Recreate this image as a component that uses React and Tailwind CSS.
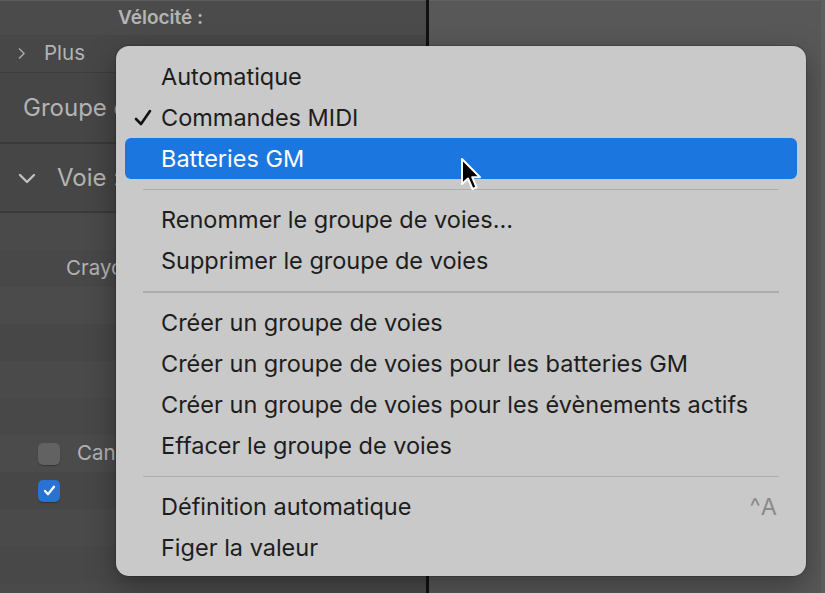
const font = { fontFamily: "Inter, 'Noto Sans', sans-serif" };

function Chevron({ down, className }) {
  return (
    <svg viewBox="0 0 20 20" className={className} fill="none" stroke="currentColor" strokeWidth="2.4" strokeLinecap="round" strokeLinejoin="round">
      {down ? <path d="M3 7l7 7 7-7" /> : <path d="M7 3l7 7-7 7" />}
    </svg>
  );
}

function MenuItem({ label, checked, active, shortcut }) {
  return (
    <div
      className={`relative mx-[9px] flex h-[41px] items-center rounded-[6px] pl-[36px] pr-[18px] text-[23.5px] ${
        active ? "bg-[#1b76e0] text-white" : "text-[#1d1d1d]"
      }`}
    >
      {checked && (
        <svg viewBox="0 0 20 20" className="absolute left-[8px] top-[11px] h-[20px] w-[20px]" fill="none" stroke="#111" strokeWidth="2.6" strokeLinecap="round" strokeLinejoin="round">
          <path d="M3 11l5 5L17 3" />
        </svg>
      )}
      <span className="flex-1">{label}</span>
      {shortcut && <span className="tracking-[2px] text-[#8a8a8a]">{shortcut}</span>}
    </div>
  );
}

function Sep() {
  return <div className="mx-[27px] my-[9.5px] h-[1.5px] bg-[#adadad]" />;
}

export default function App() {
  const stripes = ["bg-[#4a4a4a]", "bg-[#484848]", "bg-[#4b4b4b]", "bg-[#474747]", "bg-[#4a4a4a]", "bg-[#484848]", "bg-[#4b4b4b]", "bg-[#474747]", "bg-[#4a4a4a]", "bg-[#484848]"];
  return (
    <div className="relative h-[593px] w-[825px] overflow-hidden bg-[#585858]" style={font}>
      <div className="flex h-full">
        {/* left inspector panel */}
        <div className="flex w-[426px] flex-col border-t border-[#5c5c5c] bg-[#4a4a4a] text-[#b4b4b4]">
          <div className="flex h-[34px] items-center pl-[118px] text-[19px] font-semibold bg-[#4b4b4b]">Vélocité :</div>
          <div className="flex h-[38px] items-center gap-[16px] pl-[15px] text-[20.5px] bg-[#474747] border-b border-[#3c3c3c]">
            <Chevron className="h-[13px] w-[13px] text-[#a8a8a8]" />
            <span>Plus</span>
          </div>
          <div className="flex h-[71px] items-center pl-[23px] text-[24px] bg-[#464646] border-b-2 border-[#3a3a3a]">
            <span className="w-[93px] overflow-hidden whitespace-nowrap">Groupe de voies</span>
          </div>
          <div className="flex h-[69px] items-center gap-[20px] pl-[17px] text-[24px] bg-[#464646] border-b-2 border-[#3a3a3a]">
            <Chevron down className="h-[20px] w-[20px] text-[#c0c0c0]" />
            <span>Voie :</span>
          </div>
          <div className="flex flex-1 flex-col">
            {stripes.map((s, i) => (
              <div key={i} className={`relative flex h-[37px] shrink-0 items-center ${s}`}>
                {i === 1 && <span className="pl-[66px] text-[20.5px]">Crayon</span>}
                {i === 6 && (
                  <div className="flex items-center gap-[17px] pl-[38px]">
                    <div className="h-[22px] w-[22px] rounded-[5px] bg-[#626262] shadow-[0_1px_1px_rgba(0,0,0,0.3)]" />
                    <span className="text-[20.5px]">Canal</span>
                  </div>
                )}
                {i === 7 && (
                  <div className="pl-[38px]">
                    <div className="flex h-[22px] w-[22px] items-center justify-center rounded-[5px] bg-[#2a72d2] shadow-[0_1px_1px_rgba(0,0,0,0.3)]">
                      <svg viewBox="0 0 20 20" className="h-[15px] w-[15px]" fill="none" stroke="white" strokeWidth="3" strokeLinecap="round" strokeLinejoin="round">
                        <path d="M4 10.5l4 4.5 8-10" />
                      </svg>
                    </div>
                  </div>
                )}
              </div>
            ))}
          </div>
        </div>
        <div className="w-[3px] bg-[#111]" />
        <div className="flex-1 border-t border-[#626262] bg-[#585858]" />
        <div className="w-[4px] bg-[#5f5f5f]" />
      </div>

      {/* context menu */}
      <div className="absolute left-[116px] top-[46px] w-[690px] rounded-[13px] bg-[#c9c9c9] pb-[7px] pt-[10px] shadow-[0_10px_30px_rgba(0,0,0,0.35),0_0_0_1px_rgba(0,0,0,0.15)]">
        <MenuItem label="Automatique" />
        <MenuItem label="Commandes MIDI" checked />
        <MenuItem label="Batteries GM" active />
        <Sep />
        <MenuItem label="Renommer le groupe de voies…" />
        <MenuItem label="Supprimer le groupe de voies" />
        <Sep />
        <MenuItem label="Créer un groupe de voies" />
        <MenuItem label="Créer un groupe de voies pour les batteries GM" />
        <MenuItem label="Créer un groupe de voies pour les évènements actifs" />
        <MenuItem label="Effacer le groupe de voies" />
        <Sep />
        <MenuItem label="Définition automatique" shortcut="^A" />
        <MenuItem label="Figer la valeur" />
      </div>

      {/* mouse pointer */}
      <svg className="absolute left-[459px] top-[157px] h-[36px] w-[26px]" viewBox="0 0 26 36">
        <path d="M3 2 L3 27 L9 21.5 L13.5 32 L17.5 30.3 L13.2 20.2 L21 20.2 Z" fill="#000" stroke="#fff" strokeWidth="2" strokeLinejoin="round" />
      </svg>
    </div>
  );
}
